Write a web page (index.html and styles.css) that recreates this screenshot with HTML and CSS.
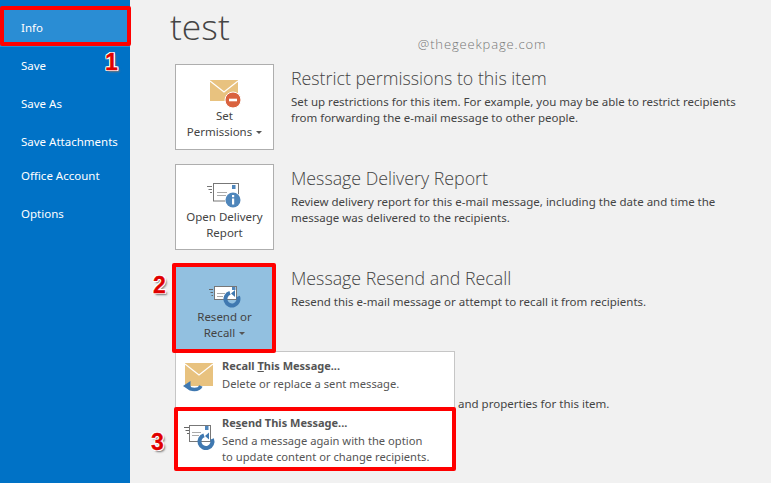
FILE: index.html
```html
<!DOCTYPE html>
<html lang="en">
<head>
<meta charset="utf-8">
<title>test</title>
<link rel="stylesheet" href="styles.css">
</head>
<body>
<div class="app">
  <nav class="side">
    <div class="nav-item nav-info">Info</div>
    <div class="nav-item">Save</div>
    <div class="nav-item">Save As</div>
    <div class="nav-item nav-tight">Save Attachments</div>
    <div class="nav-item">Office Account</div>
    <div class="nav-item">Options</div>
  </nav>
  <main class="main">
    <header class="title-row">
      <h1 class="title">test</h1>
      <div class="mark">@thegeekpage.com</div>
    </header>
    <section class="row row-one">
      <div class="tile">
        <svg class="ico" width="35" height="28" viewBox="0 0 35 28">
          <rect x="3" y="0" width="28" height="21" fill="#e8c27f"/>
          <path d="M3 1 L17 12 L31 1" fill="none" stroke="#fff" stroke-width="1.2"/>
          <circle cx="26" cy="20" r="8" fill="#d9623f" stroke="#fff" stroke-width="1"/>
          <rect x="22" y="18.700" width="8" height="2.600" fill="#fff"/>
        </svg>
        <div class="tile-text">Set<br>Permissions<span class="caret"></span></div>
      </div>
      <div class="info">
        <h2 class="info-head">Restrict permissions to this item</h2>
        <p class="info-body">Set up restrictions for this item. For example, you may be able to restrict recipients<br>from forwarding the e-mail message to other people.</p>
      </div>
    </section>
    <section class="row row-two">
      <div class="tile">
        <svg class="ico ico-low" width="35" height="25" viewBox="0 0 35 25">
          <path d="M0 3.500h5M1.500 6.500h3.500M3 9.500h2" stroke="#777" stroke-width="1" fill="none"/>
          <rect x="6.500" y="0.500" width="25" height="17.500" fill="#fff" stroke="#777"/>
          <rect x="25" y="2" width="3.500" height="4" fill="#4f86bb"/>
          <path d="M10 9.500h10M10 12.500h9" stroke="#aaa" stroke-width="1"/>
          <circle cx="26" cy="17" r="8" fill="#fff"/>
          <circle cx="26" cy="17" r="7.500" fill="#4f86bb"/>
          <rect x="25" y="15.500" width="2.200" height="6" fill="#fff"/>
          <rect x="25" y="12" width="2.200" height="2.200" fill="#fff"/>
        </svg>
        <div class="tile-text tile-text-low">Open Delivery<br>Report</div>
      </div>
      <div class="info">
        <h2 class="info-head">Message Delivery Report</h2>
        <p class="info-body">Review delivery report for this e-mail message, including the date and time the<br>message was delivered to the recipients.</p>
      </div>
    </section>
    <section class="row row-three">
      <div class="tile tile-on">
        <svg class="ico ico-low" width="35" height="25" viewBox="0 0 35 25">
          <path d="M2 6.500h4M3.500 9.500h2.500M4.500 12.500h1.500" stroke="#666" stroke-width="1" fill="none"/>
          <rect x="7.500" y="3.500" width="22" height="13" fill="#fff" stroke="#777"/>
          <rect x="25" y="4" width="3.500" height="3" fill="#4f86bb"/>
          <path d="M10 10.500h8M10 13.500h6" stroke="#aaa" stroke-width="1"/>
          <path d="M23 9.800 A6.500 6.500 0 1 0 31 13.600" fill="none" stroke="#3f78b0" stroke-width="4"/>
          <path d="M28 7 L28 14 L24 10.500z" fill="#3f78b0"/>
        </svg>
        <div class="tile-text tile-text-low">Resend or<br>Recall<span class="caret"></span></div>
      </div>
      <div class="info">
        <h2 class="info-head">Message Resend and Recall</h2>
        <p class="info-body">Resend this e-mail message or attempt to recall it from recipients.</p>
      </div>
    </section>
    <p class="info-body behind">and properties for this item.</p>
  </main>
</div>

<div class="menu">
  <div class="menu-item menu-recall">
    <svg class="menu-ico" width="32" height="32" viewBox="0 0 32 32">
      <rect x="2" y="0" width="28" height="23" fill="#e8c27f"/>
      <path d="M2 1 L16 12 L30 1" fill="none" stroke="#fff" stroke-width="1.200"/>
      <path d="M5 23 A7 5.500 0 0 0 18 23" fill="none" stroke="#3f78b0" stroke-width="3.500"/>
      <path d="M0 23 L7.500 18 L7.500 28z" fill="#3f78b0"/>
    </svg>
    <div>
      <div class="menu-head">Recall <u>T</u>his Message...</div>
      <div class="menu-body">Delete or replace a sent message.</div>
    </div>
  </div>
  <div class="menu-item menu-resend">
    <svg class="menu-ico" width="32" height="32" viewBox="0 0 32 32">
      <path d="M1 7.500h5M2.500 10.500h3.500M4 13.500h2" stroke="#666" stroke-width="1" fill="none"/>
      <rect x="6.500" y="5.500" width="21" height="16" fill="#fff" stroke="#777"/>
      <rect x="22" y="6" width="3.500" height="4" fill="#4f86bb"/>
      <path d="M9 12.500h9M9 15.500h7" stroke="#aaa" stroke-width="1"/>
      <path d="M21 15.300 A6.500 6.500 0 1 0 29 19.100" fill="none" stroke="#3f78b0" stroke-width="4"/>
      <path d="M26 12.500 L26 19.500 L22 16z" fill="#3f78b0"/>
    </svg>
    <div>
      <div class="menu-head">Re<u>s</u>end This Message...</div>
      <div class="menu-body">Send a message again with the option<br>to update content or change recipients.</div>
    </div>
  </div>
</div>

<div class="box box-info"></div>
<div class="box box-tile"></div>
<div class="box box-resend"></div>
<div class="num num-1">1</div>
<div class="num num-2">2</div>
<div class="num num-3">3</div>
</body>
</html>
```

FILE: styles.css
```css
html, body {
  margin: 0;
  height: 100%;
  overflow: hidden;
}
body {
  position: relative;
  background: #f1f1f1;
  color: #444;
  font-family: "Noto Sans", "Open Sans", sans-serif;
}
.app {
  display: flex;
  height: 483px;
}
.side {
  width: 130px;
  flex: none;
  background: #0072c6;
  padding-top: 8px;
  box-sizing: border-box;
}
.nav-item {
  height: 38px;
  line-height: 40px;
  padding-left: 21px;
  color: #fff;
  font-size: 11.500px;
  box-sizing: border-box;
}
.nav-info {
  height: 39px;
  line-height: 40px;
  margin-bottom: -1px;
  background: #2a8dd4;
}
.nav-tight {
  height: 34px;
}
.main {
  flex: 1;
  padding-left: 40px;
  min-width: 0;
}
.title-row {
  display: flex;
  align-items: flex-start;
  height: 64px;
}
.title {
  margin: 0;
  font-size: 35.500px;
  font-weight: 300;
  font-family: "Open Sans", sans-serif;
  line-height: 52px;
  color: #444;
}
.mark {
  margin-left: 188px;
  margin-top: 36px;
  font-size: 13px;
  line-height: 17px;
  color: #777;
  font-family: "Open Sans", sans-serif;
  font-weight: 300;
  letter-spacing: 0.850px;
}
.row {
  display: flex;
  margin-left: 5px;
}
.row-one, .row-two {
  height: 100px;
}
.row-three {
  height: 101px;
}
.tile {
  width: 99px;
  height: 86px;
  box-sizing: border-box;
  flex: none;
  background: #fff;
  border: 1px solid #aeaeae;
  display: flex;
  flex-direction: column;
  align-items: center;
  padding-top: 15px;
}
.tile-on {
  background: #92c0e0;
  border-color: #92c0e0;
}
.ico {
  display: block;
  flex: none;
}
.ico-low {
  margin-top: 3px;
}
.tile-text {
  text-align: center;
  font-size: 11.500px;
  line-height: 16px;
  color: #444;
}
.tile-text-low {
  margin-top: 1px;
}
.caret {
  display: inline-block;
  margin-left: 4px;
  vertical-align: middle;
  border-left: 3px solid transparent;
  border-right: 3px solid transparent;
  border-top: 3px solid #555;
}
.info {
  margin-left: 17px;
}
.info-head {
  margin: 0;
  font-size: 17.800px;
  font-weight: 300;
  font-family: "Open Sans", sans-serif;
  line-height: 28px;
  color: #444;
}
.info-body {
  margin: 2px 0 0;
  font-size: 11.500px;
  line-height: 16px;
  color: #444;
}
.behind {
  margin-left: 288px;
  margin-top: 31px;
}
.menu {
  position: absolute;
  left: 175px;
  top: 351px;
  width: 280px;
  height: 118px;
  box-sizing: border-box;
  background: #fff;
  border: 1px solid #c6c6c6;
}
.menu-item {
  display: flex;
  align-items: flex-start;
  column-gap: 7px;
  padding-left: 7px;
  box-sizing: border-box;
}
.menu-recall {
  height: 58px;
  padding-top: 5px;
}
.menu-resend {
  height: 59px;
  padding-top: 4px;
}
.menu-ico {
  flex: none;
  margin-top: 6px;
  overflow: visible;
}
.menu-head {
  font-size: 11px;
  line-height: 18px;
  margin-bottom: 1px;
  font-weight: 700;
  color: #555;
}
.menu-body {
  font-size: 11.200px;
  line-height: 16px;
  color: #555;
}
.box {
  position: absolute;
  box-sizing: border-box;
  border: 4px solid #f00;
  border-radius: 2px;
}
.box-info {
  left: 0;
  top: 6px;
  width: 131px;
  height: 40px;
}
.box-tile {
  left: 172px;
  top: 263px;
  width: 104px;
  height: 90px;
}
.box-resend {
  left: 174px;
  top: 407px;
  width: 282px;
  height: 64px;
}
.num {
  position: absolute;
  font-family: "Liberation Sans", sans-serif;
  font-weight: 700;
  font-size: 23px;
  line-height: 24px;
  color: #e00000;
  -webkit-text-stroke: 0.300px #e00000;
  text-shadow: 1px 0 0 #fff, -1px 0 0 #fff, 0 1px 0 #fff, 0 -1px 0 #fff, 1px 1px 0 #fff, -1px -1px 0 #fff, 1px -1px 0 #fff, -1px 1px 0 #fff, 2px 2px 2px #777;
}
.num-1 { left: 105px; top: 50px; }
.num-2 { left: 153px; top: 273px; }
.num-3 { left: 151px; top: 430px; }
```
